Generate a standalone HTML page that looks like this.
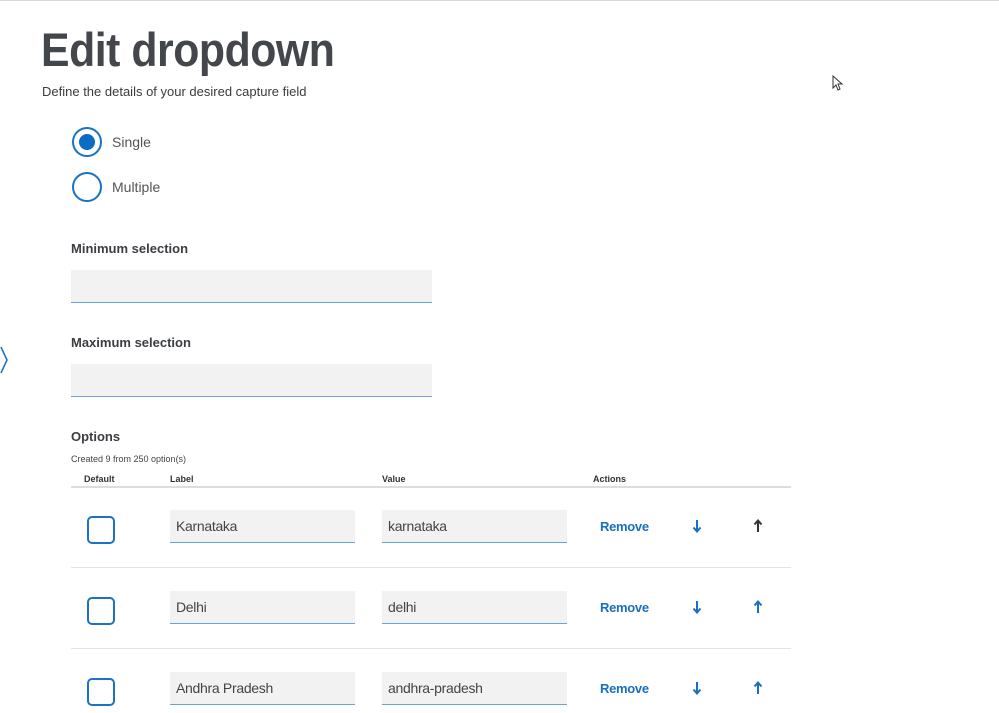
<!DOCTYPE html>
<html><head><style>
body{margin:0;width:999px;height:713px;background:#fff;position:relative;overflow:hidden;font-family:"Liberation Sans",sans-serif;color:#333}
.a{position:absolute}
.top{left:0;top:0;width:999px;height:1px;background:#d8d8d8}
h1{position:absolute;left:41px;top:22px;margin:0;font-size:47px;font-weight:bold;color:#43464b;letter-spacing:-0.5px;transform:scaleX(0.91);transform-origin:0 0;white-space:nowrap}
.sub{left:42px;top:84px;font-size:13px;color:#3b3b3b}
.radio{width:30px;height:30px;border:2px solid #1a73c4;border-radius:50%;box-sizing:border-box}
.dot{position:absolute;left:5px;top:5px;width:16px;height:16px;border-radius:50%;background:#0a6cc2}
.rl{font-size:14px;color:#555}
.lbl{font-size:13px;font-weight:bold;color:#3a3d42}
.inp{background:#f2f2f2;border-bottom:1px solid #6aa3d8;box-sizing:border-box}
.th{font-size:9px;font-weight:bold;color:#333;top:474px}
.cb{width:28px;height:28px;border:2px solid #1a73c4;border-radius:5px;box-sizing:border-box}
.txt{font-size:14px;color:#444;padding:8px 6px;box-sizing:border-box;letter-spacing:-0.3px}
.rm{font-size:13px;font-weight:bold;color:#1a6fbf;letter-spacing:-0.3px}
.sep{left:71px;width:720px;height:1px;background:#e4e4e4}
</style></head><body>
<div class="a top"></div>
<h1>Edit dropdown</h1>
<div class="a sub">Define the details of your desired capture field</div>
<div class="a radio" style="left:72px;top:127px"><div class="dot"></div></div>
<div class="a rl" style="left:112px;top:134px">Single</div>
<div class="a radio" style="left:72px;top:172px"></div>
<div class="a rl" style="left:112px;top:179px">Multiple</div>
<div class="a lbl" style="left:71px;top:241px">Minimum selection</div>
<div class="a inp" style="left:71px;top:270px;width:361px;height:33px"></div>
<div class="a lbl" style="left:71px;top:335px">Maximum selection</div>
<div class="a inp" style="left:71px;top:364px;width:361px;height:33px"></div>
<svg class="a" style="left:0;top:345px" width="10" height="30"><path d="M1 2 L7 15 L1 28" stroke="#1a6fbf" stroke-width="1.5" fill="none"/></svg>
<svg class="a" style="left:832px;top:75px" width="12" height="16"><path d="M1 1 L1 13 L4 10 L6 15 L8 14 L6 9 L10 9 Z" fill="#fff" stroke="#333" stroke-width="1"/></svg>
<div class="a lbl" style="left:71px;top:429px">Options</div>
<div class="a" style="left:71px;top:454px;font-size:9px;color:#444">Created 9 from 250 option(s)</div>
<div class="a th" style="left:84px">Default</div>
<div class="a th" style="left:170px">Label</div>
<div class="a th" style="left:382px">Value</div>
<div class="a th" style="left:593px">Actions</div>
<div class="a" style="left:71px;top:486px;width:720px;height:2px;background:#ddd"></div>

<div class="a cb" style="left:87px;top:516px"></div>
<div class="a inp txt" style="left:170px;top:510px;width:185px;height:33px">Karnataka</div>
<div class="a inp txt" style="left:382px;top:510px;width:185px;height:33px">karnataka</div>
<div class="a rm" style="left:600px;top:519px">Remove</div>
<svg class="a" style="left:692px;top:519px" width="10" height="14"><path d="M5 1V12M1.5 8.5L5 12.5L8.5 8.5" stroke="#1a6fbf" stroke-width="2" fill="none"/></svg>
<svg class="a" style="left:753px;top:519px" width="10" height="14"><path d="M5 13V2M1.5 5.5L5 1.5L8.5 5.5" stroke="#333" stroke-width="2" fill="none"/></svg>
<div class="a sep" style="top:567px"></div>

<div class="a cb" style="left:87px;top:597px"></div>
<div class="a inp txt" style="left:170px;top:591px;width:185px;height:33px">Delhi</div>
<div class="a inp txt" style="left:382px;top:591px;width:185px;height:33px">delhi</div>
<div class="a rm" style="left:600px;top:600px">Remove</div>
<svg class="a" style="left:692px;top:600px" width="10" height="14"><path d="M5 1V12M1.5 8.5L5 12.5L8.5 8.5" stroke="#1a6fbf" stroke-width="2" fill="none"/></svg>
<svg class="a" style="left:753px;top:600px" width="10" height="14"><path d="M5 13V2M1.5 5.5L5 1.5L8.5 5.5" stroke="#1a6fbf" stroke-width="2" fill="none"/></svg>
<div class="a sep" style="top:648px"></div>

<div class="a cb" style="left:87px;top:678px"></div>
<div class="a inp txt" style="left:170px;top:672px;width:185px;height:33px">Andhra Pradesh</div>
<div class="a inp txt" style="left:382px;top:672px;width:185px;height:33px">andhra-pradesh</div>
<div class="a rm" style="left:600px;top:681px">Remove</div>
<svg class="a" style="left:692px;top:681px" width="10" height="14"><path d="M5 1V12M1.5 8.5L5 12.5L8.5 8.5" stroke="#1a6fbf" stroke-width="2" fill="none"/></svg>
<svg class="a" style="left:753px;top:681px" width="10" height="14"><path d="M5 13V2M1.5 5.5L5 1.5L8.5 5.5" stroke="#1a6fbf" stroke-width="2" fill="none"/></svg>
</body></html>
